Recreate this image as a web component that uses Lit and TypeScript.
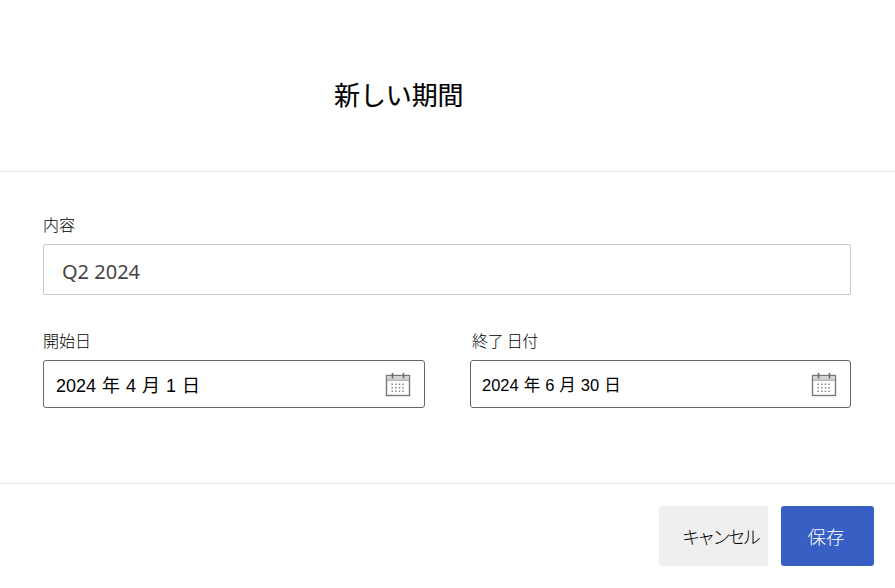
import { LitElement, html, css, svg } from "lit";
import { customElement } from "lit/decorators.js";

const dots = [0, 1, 2, 3].flatMap((c) =>
  [0, 1, 2].map((r) => svg`<rect x=${6.5 + c * 3.6} y=${11.5 + r * 3.5} width="1.5" height="1.5" fill="#8a8a8a"></rect>`)
);

const calendar = html`<svg class="cal" width="26" height="25" viewBox="0 0 26 25" fill="none">
  <rect x="1.5" y="3.5" width="23" height="20" stroke="#777" stroke-width="1.4"></rect>
  <path d="M1.5 8h23" stroke="#8a8a8a" stroke-width="1.2"></path>
  <rect x="2" y="4" width="22" height="3.5" fill="#d4d4d4"></rect>
  <path d="M7.5 1v5.5M18.5 1v5.5" stroke="#666" stroke-width="1.5"></path>
  ${dots}
</svg>`;

@customElement("app-root")
export class AppRoot extends LitElement {
  static styles = css`
    :host {
      display: block;
      width: 895px;
      height: 588px;
      background: #fff;
      overflow: hidden;
      font-family: "Liberation Sans", Arial, "Noto Sans CJK JP", sans-serif;
      color: #000;
    }
    .head {
      height: 172px;
      box-sizing: border-box;
      border-bottom: 1px solid #e6e6e6;
      padding: 76px 0 0 334px;
    }
    h1 {
      margin: 0;
      font-size: 26px;
      line-height: 36px;
      font-weight: 400;
      font-family: "Noto Sans CJK JP", sans-serif;
      letter-spacing: -0.1px;
      -webkit-text-stroke: 0.15px #000;
    }
    .body {
      height: 311px;
      box-sizing: border-box;
      padding: 42px 44px 0 43px;
      display: flex;
      flex-direction: column;
    }
    label {
      display: block;
      font-size: 16px;
      line-height: 20px;
      height: 20px;
      font-family: "Noto Sans CJK JP", sans-serif;
      font-weight: 300;
      color: #000;
    }
    label.end {
      padding-left: 2px;
      letter-spacing: -0.3px;
    }
    .text {
      margin-top: 10px;
      height: 51px;
      box-sizing: border-box;
      border: 1px solid #c8c8c8;
      border-radius: 2px;
      padding: 3px 0 0 18px;
      display: flex;
      align-items: center;
      font-size: 20px;
      color: #444;
      font-family: "Noto Sans", sans-serif;
    }
    .row {
      margin-top: 35px;
      display: grid;
      grid-template-columns: 382px 381px;
      column-gap: 45px;
    }
    .date {
      margin-top: 10px;
      height: 48px;
      box-sizing: border-box;
      border: 1px solid #666;
      border-radius: 3px;
      display: flex;
      align-items: center;
      justify-content: space-between;
      padding: 0 13px 0 12px;
      font-size: 18px;
      word-spacing: 1px;
      font-family: "Liberation Sans", "Noto Sans CJK JP", sans-serif;
      white-space: pre;
    }
    .date.small {
      font-size: 16.5px;
      padding-left: 11px;
      word-spacing: 0.4px;
    }
    .foot {
      border-top: 1px solid #e6e6e6;
      display: flex;
      justify-content: flex-end;
      gap: 13px;
      padding: 22px 21px 0 0;
    }
    .btn {
      width: 109px;
      height: 60px;
      border-radius: 3px;
      display: flex;
      align-items: center;
      justify-content: center;
      font-size: 18px;
      font-family: "Noto Sans CJK JP", sans-serif;
      font-weight: 300;
      background: #efefef;
      color: #000;
      padding-left: 13px;
      box-sizing: border-box;
      letter-spacing: -2.8px;
    }
    .btn.primary {
      width: 93px;
      background: #385fc4;
      color: #fff;
      padding: 0 3px 0 0;
      font-size: 18.5px;
      letter-spacing: 0;
    }
    .cal {
      display: block;
    }
  `;

  render() {
    return html`
      <div class="head"><h1>新しい期間</h1></div>
      <div class="body">
        <label>内容</label>
        <div class="text">Q2 2024</div>
        <div class="row">
          <div>
            <label>開始日</label>
            <div class="date"><span>2024 年 4 月 1 日</span>${calendar}</div>
          </div>
          <div>
            <label class="end">終了 日付</label>
            <div class="date small"><span>2024 年 6 月 30 日</span>${calendar}</div>
          </div>
        </div>
      </div>
      <div class="foot">
        <div class="btn">キャンセル</div>
        <div class="btn primary">保存</div>
      </div>
    `;
  }
}
